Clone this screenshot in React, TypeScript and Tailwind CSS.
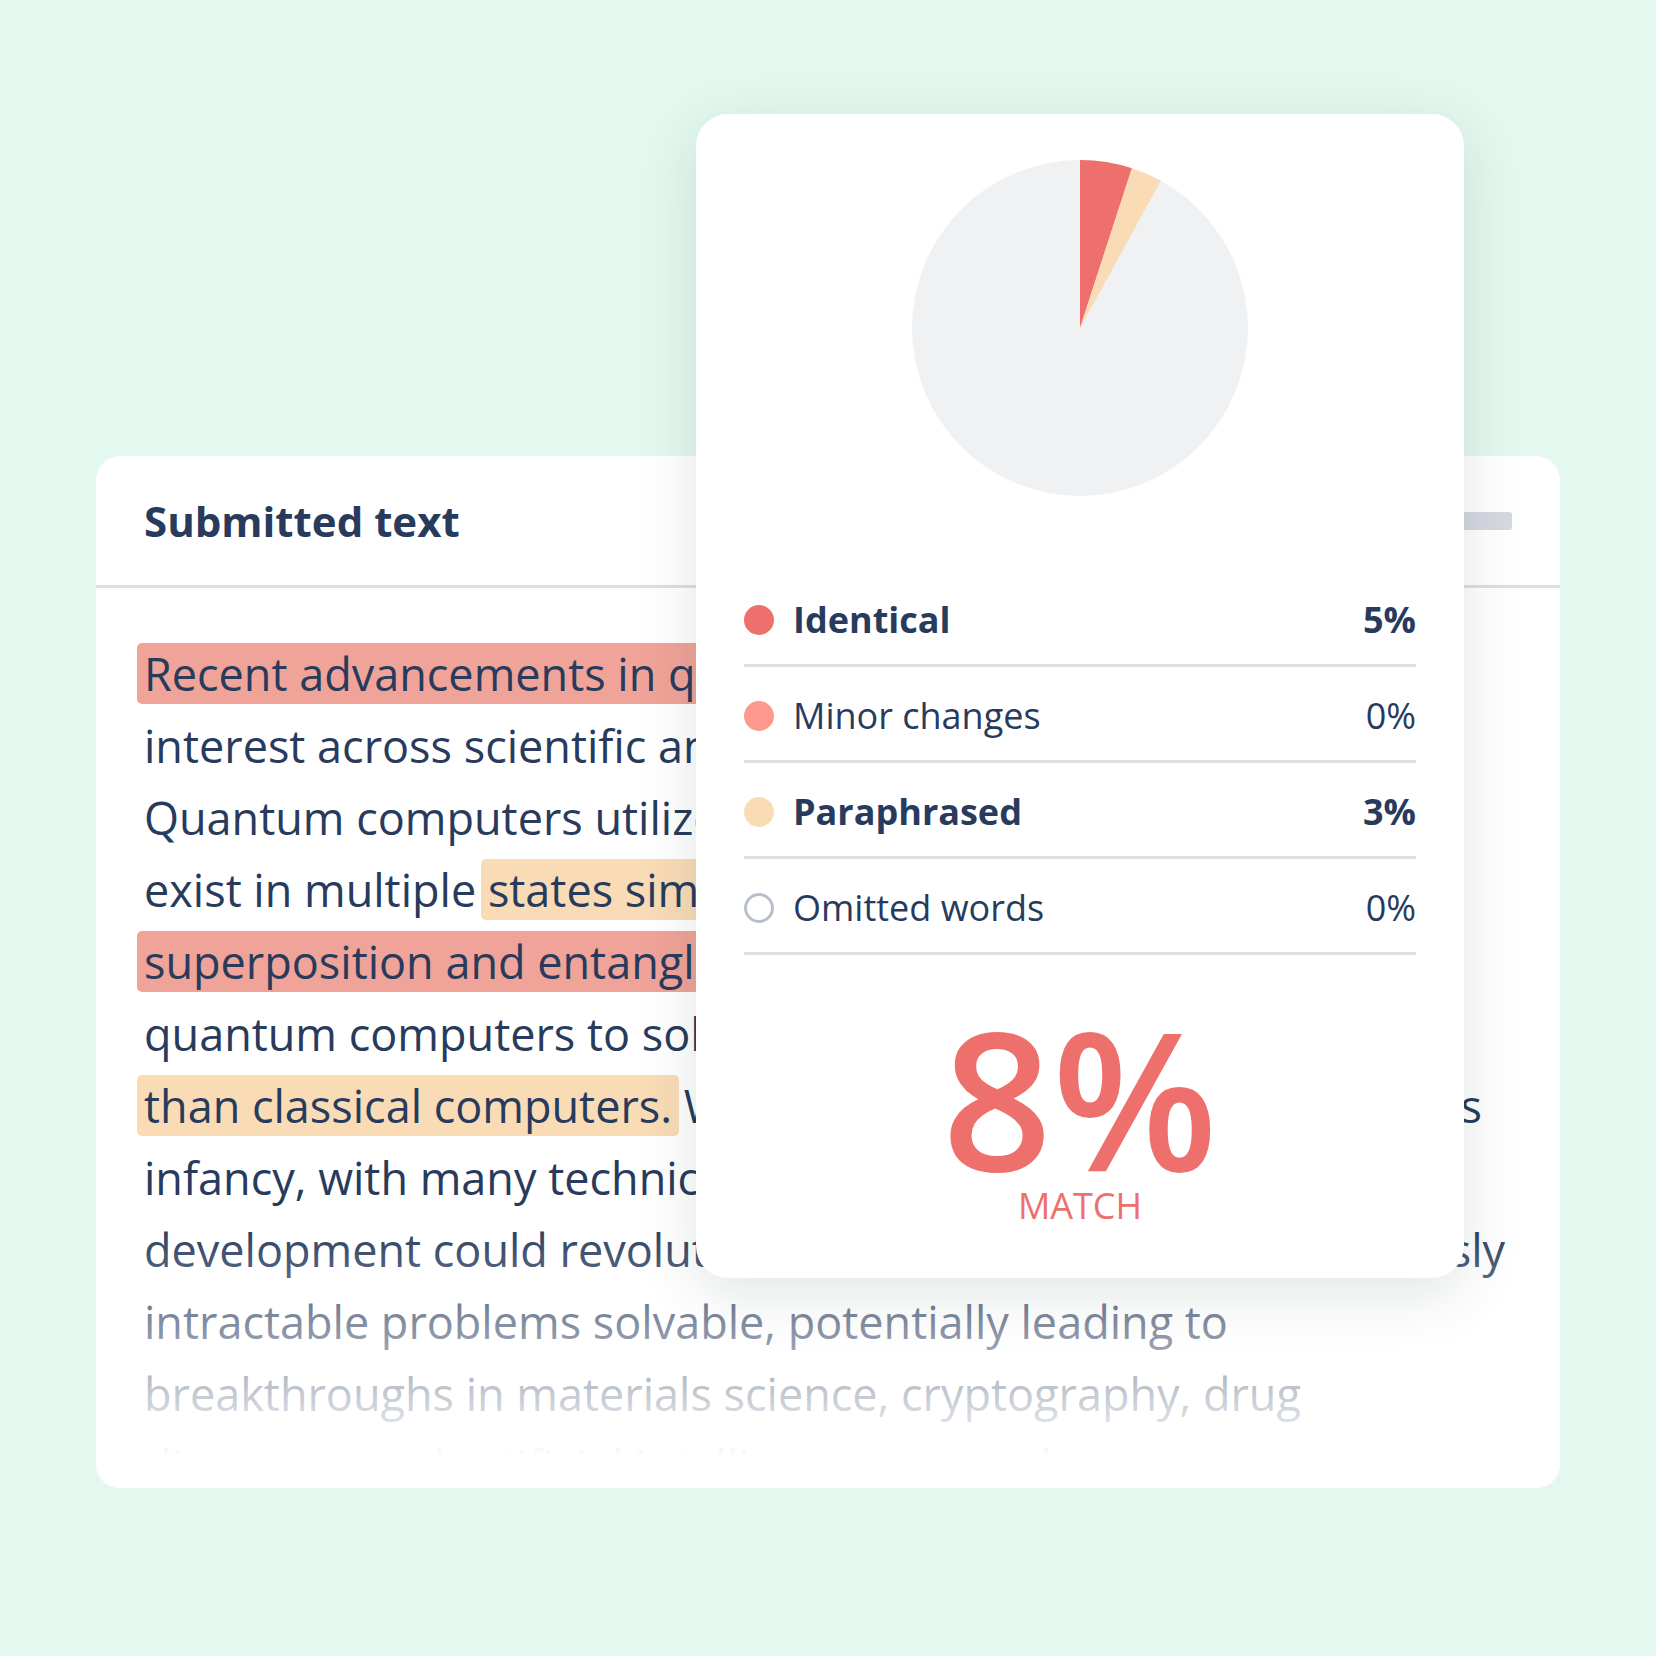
import React from "react";

const Hl = ({ tone, children }: { tone: "red" | "peach"; children: React.ReactNode }) => (
  <span
    className={
      (tone === "red" ? "bg-[#f0a398]" : "bg-[#f9dcb6]") +
      " rounded-[5px] px-[7px] -mx-[7px] box-decoration-clone"
    }
  >
    {children}
  </span>
);

const lines: React.ReactNode[] = [
  <Hl tone="red">Recent advancements in quantum computing have sparked</Hl>,
  "interest across scientific and industrial communities.",
  "Quantum computers utilize qubits, which can",
  <>
    exist in multiple <Hl tone="peach">states simultaneously through</Hl>
  </>,
  <Hl tone="red">superposition and entanglement, allowing</Hl>,
  "quantum computers to solve certain problems faster",
  <>
    <Hl tone="peach">than classical computers.</Hl> While such technology is still within its
  </>,
  "infancy, with many technical hurdles remaining, its",
  "development could revolutionize industries by making previously",
  "intractable problems solvable, potentially leading to",
  "breakthroughs in materials science, cryptography, drug",
  "discovery, and artificial intelligence research.",
];

const legend = [
  { label: "Identical", value: "5%", dot: "bg-[#ee706c]", bold: true },
  { label: "Minor changes", value: "0%", dot: "bg-[#fd9a8d]", bold: false },
  { label: "Paraphrased", value: "3%", dot: "bg-[#f9dcb5]", bold: true },
  { label: "Omitted words", value: "0%", dot: "border-[3px] border-[#b8bfcc] bg-white", bold: false },
];

const Pie = () => (
  <svg width="336" height="336" viewBox="0 0 336 336">
    <circle cx="168" cy="168" r="168" fill="#f0f1f3" />
    <path d="M168 168 L168 0 A168 168 0 0 1 219.92 8.22 Z" fill="#ee706c" />
    <path d="M168 168 L219.92 8.22 A168 168 0 0 1 248.93 20.78 Z" fill="#f9dcb5" />
  </svg>
);

export default function App() {
  return (
    <div className="relative w-[1656px] h-[1656px] bg-[#e3f8ef] pt-[456px] pl-[96px] font-['Open_Sans',sans-serif] text-[#283b5d]">
      {/* submitted text card */}
      <div className="relative w-[1464px] h-[1032px] bg-white rounded-[24px] overflow-hidden">
        <div className="h-[132px] px-[48px] flex items-center justify-between border-b-[3px] border-[#dddee5]">
          <h1 className="text-[42px] font-bold leading-none">Submitted text</h1>
          <div className="w-[160px] h-[18px] rounded-[3px] bg-[#d6d8e0]" />
        </div>
        <div className="pt-[50px] px-[48px] text-[45px] leading-[72px] whitespace-nowrap">
          {lines.map((l, i) => (
            <div key={i}>{l}</div>
          ))}
        </div>
        <div className="absolute inset-x-0 top-[768px] bottom-0 bg-[linear-gradient(to_bottom,rgba(255,255,255,0)_0%,#ffffff_89%)]" />
      </div>

      {/* result card */}
      <div className="absolute left-[696px] top-[114px] w-[768px] h-[1164px] bg-white rounded-[32px] shadow-[0_16px_60px_rgba(20,40,30,0.12)] px-[48px] pt-[46px] flex flex-col">
        <div className="flex justify-center">
          <Pie />
        </div>
        <div className="mt-[75px]">
          {legend.map((r) => (
            <div
              key={r.label}
              className="h-[96px] pt-[4px] flex items-center justify-between border-b-[3px] border-[#dcdee3] text-[36px]"
            >
              <div className="flex items-center">
                <span className={"w-[30px] h-[30px] rounded-full " + r.dot} />
                <span className={"ml-[19px] " + (r.bold ? "font-bold" : "")}>{r.label}</span>
              </div>
              <span className={r.bold ? "font-bold" : ""}>{r.value}</span>
            </div>
          ))}
        </div>
        <div className="mt-[46px] flex flex-col items-center text-[#ee706c]">
          <div className="text-[192px] font-semibold leading-none">8%</div>
          <div className="-mt-[5px] text-[36px] leading-none">MATCH</div>
        </div>
      </div>
    </div>
  );
}
